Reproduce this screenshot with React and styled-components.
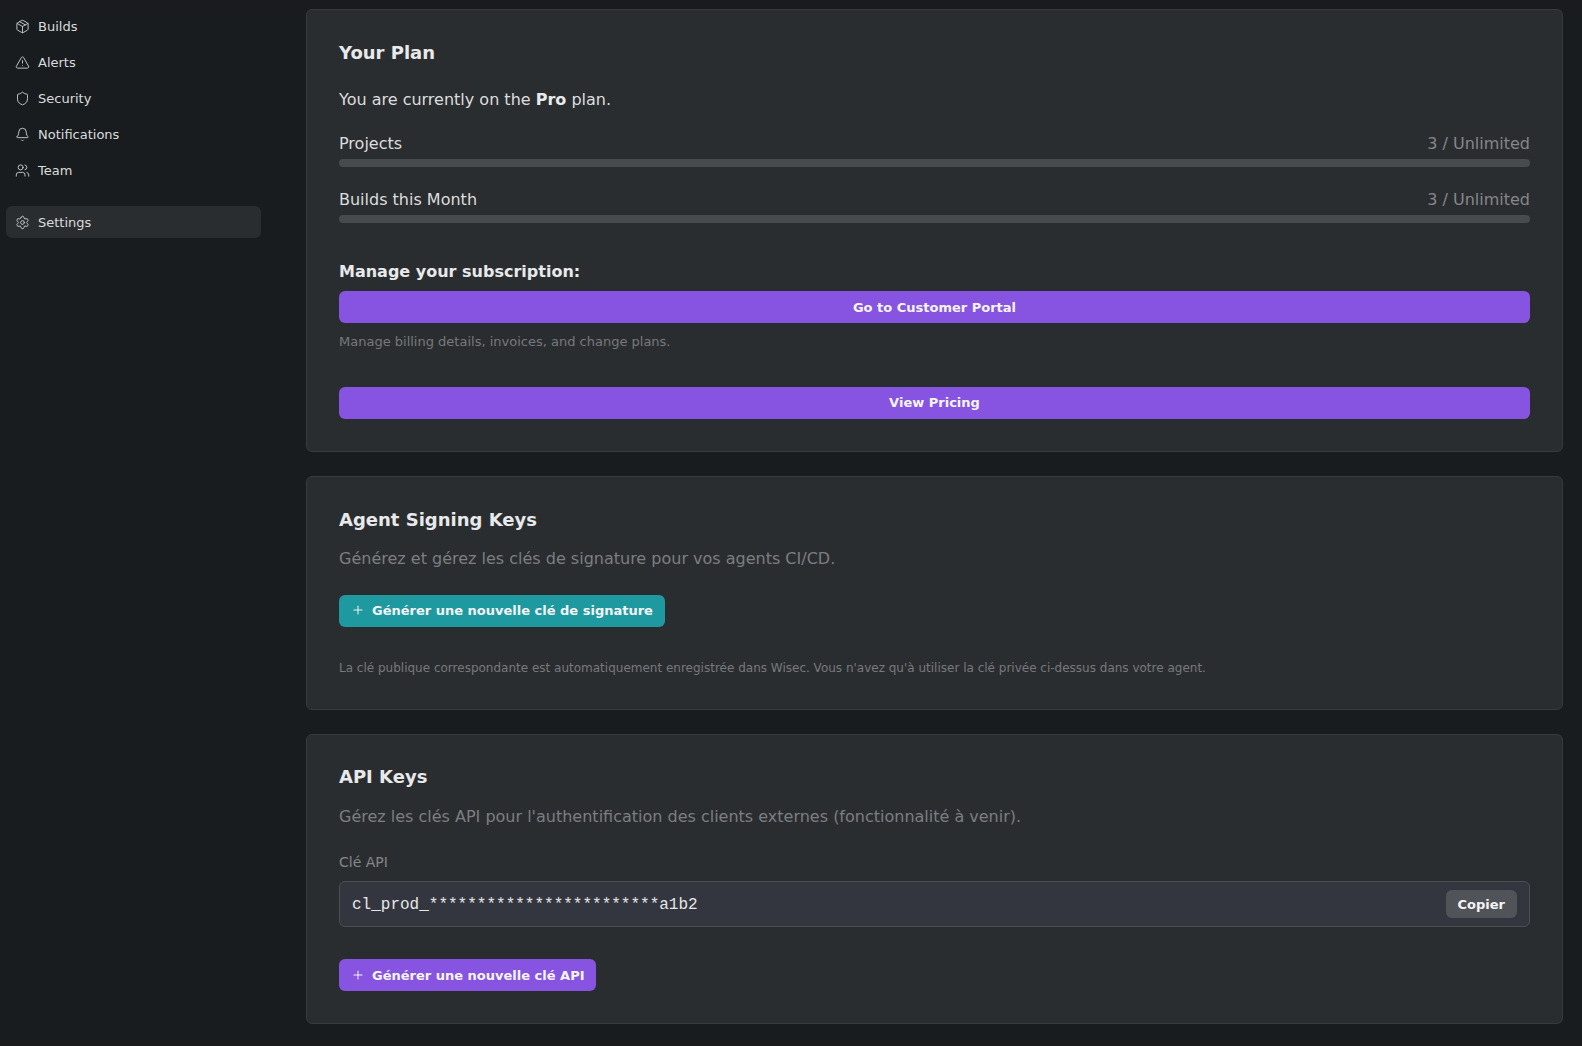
import React from "react";
import styled, { createGlobalStyle } from "styled-components";
import { Package, TriangleAlert, Shield, Bell, Users, Settings, Plus } from "lucide-react";

const Global = createGlobalStyle`
  html, body { margin: 0; padding: 0; background: #1a1b1d; height: 100%; overflow: hidden; }
  body { font-family: "DejaVu Sans", sans-serif; color: #e6e7e8; }
  * { box-sizing: border-box; }
`;
const Shell = styled.div`
  display: flex;
  height: 1035px;
  margin-top: 5px;
  background: #181c1f;
`;
const Sidebar = styled.nav`
  width: 267px;
  flex: none;
  padding: 5px 6px 0;
  display: flex;
  flex-direction: column;
  gap: 4px;
`;
const NavItem = styled.div`
  height: 32px;
  display: flex;
  align-items: center;
  gap: 8px;
  padding: 0 8px;
  border-radius: 6px;
  font-size: 13px;
  color: #dadbdc;
  margin-top: ${p => (p.$spaced ? "16px" : "0")};
  background: ${p => (p.$active ? "#2a2d30" : "transparent")};
  svg { width: 15px; height: 15px; margin: 0 0.5px; stroke-width: 1.5; color: #c8cacb; }
`;
const Main = styled.main`
  flex: 1;
  padding: 4px 19px 0 39px;
  display: flex;
  flex-direction: column;
  gap: 24px;
`;
const Card = styled.section`
  background: #2a2d30;
  border: 1px solid #373a3d;
  border-radius: 6px;
  padding: 32px;
`;
const Title = styled.h2`
  margin: ${p => p.$mt || 0}px 0 ${p => p.$mb}px;
  font-size: 18px;
  line-height: 21px;
  font-weight: 700;
  color: #e8e9ea;
`;
const Text = styled.p`
  margin: 0 0 ${p => p.$mb}px;
  font-size: 16px;
  line-height: 24px;
  color: ${p => (p.$muted ? "#7c7e81" : "#dcddde")};
  b { color: #e8e9ea; }
`;
const UsageRow = styled.div`
  display: flex;
  justify-content: space-between;
  font-size: 16px;
  line-height: 24px;
  color: #dcddde;
  margin-bottom: 3px;
`;
const UsageValue = styled.span`
  color: #85878a;
`;
const Bar = styled.div`
  height: 8px;
  border-radius: 4px;
  background: #484b4e;
  margin-bottom: ${p => p.$mb}px;
`;
const Subhead = styled.h3`
  margin: 0 0 7px;
  font-size: 16px;
  line-height: 24px;
  font-weight: 700;
  color: #e8e9ea;
`;
const Button = styled.button`
  height: 32px;
  border: none;
  border-radius: 6px;
  padding: 0 ${p => (p.$full ? "12px" : "11.6px")} ${p => (p.$nudge ? "2px" : "0")} 12px;
  display: ${p => (p.$full ? "flex" : "inline-flex")};
  width: ${p => (p.$full ? "100%" : "auto")};
  justify-content: center;
  align-items: center;
  gap: 6px;
  font-family: inherit;
  font-size: 13px;
  font-weight: 700;
  color: #f4f4f5;
  background: ${p => (p.$teal ? "#1e99a0" : "#8654e0")};
  svg { width: 14px; height: 14px; stroke-width: 1.75; margin-right: 1px; }
`;
const Hint = styled.p`
  margin: ${p => p.$mt}px 0 ${p => p.$mb}px;
  font-size: ${p => p.$size}px;
  line-height: 20px;
  color: #77797c;
`;
const Label = styled.div`
  font-size: 14px;
  line-height: 20px;
  color: #85878a;
  margin-bottom: 9px;
`;
const KeyBox = styled.div`
  height: 46px;
  display: flex;
  align-items: center;
  justify-content: space-between;
  padding: 0 12px;
  border: 1px solid #4c4f52;
  border-radius: 6px;
  background: #33363e;
  margin-bottom: 32px;
`;
const KeyText = styled.span`
  font-family: "Liberation Mono", monospace;
  font-size: 16px;
  padding-top: 2px;
  color: #e6e7e8;
`;
const CopyButton = styled.button`
  height: 28px;
  padding: 0 12px;
  border: none;
  border-radius: 6px;
  background: #505357;
  color: #f4f4f5;
  font-family: inherit;
  font-size: 13px;
  font-weight: 700;
`;

const nav = [
  [Package, "Builds"],
  [TriangleAlert, "Alerts"],
  [Shield, "Security"],
  [Bell, "Notifications"],
  [Users, "Team"],
];

export default function App() {
  return (
    <>
      <Global />
      <Shell>
        <Sidebar>
          {nav.map(([Icon, label]) => (
            <NavItem key={label}><Icon />{label}</NavItem>
          ))}
          <NavItem $active $spaced><Settings />Settings</NavItem>
        </Sidebar>
        <Main>
          <Card>
            <Title $mb={25}>Your Plan</Title>
            <Text $mb={20}>You are currently on the <b>Pro</b> plan.</Text>
            <UsageRow><span>Projects</span><UsageValue>3 / Unlimited</UsageValue></UsageRow>
            <Bar $mb={21} />
            <UsageRow><span>Builds this Month</span><UsageValue>3 / Unlimited</UsageValue></UsageRow>
            <Bar $mb={37} />
            <Subhead>Manage your subscription:</Subhead>
            <Button $full>Go to Customer Portal</Button>
            <Hint $size={13} $mt={9} $mb={35}>Manage billing details, invoices, and change plans.</Hint>
            <Button $full $nudge>View Pricing</Button>
          </Card>
          <Card>
            <Title $mb={17}>Agent Signing Keys</Title>
            <Text $muted $mb={24}>Générez et gérez les clés de signature pour vos agents CI/CD.</Text>
            <Button $teal $nudge><Plus />Générer une nouvelle clé de signature</Button>
            <Hint $size={12} $mt={31} $mb={-1}>La clé publique correspondante est automatiquement enregistrée dans Wisec. Vous n'avez qu'à utiliser la clé privée ci-dessus dans votre agent.</Hint>
          </Card>
          <Card>
            <Title $mt={-1} $mb={18}>API Keys</Title>
            <Text $muted $mb={23}>Gérez les clés API pour l'authentification des clients externes (fonctionnalité à venir).</Text>
            <Label>Clé API</Label>
            <KeyBox>
              <KeyText>cl_prod_************************a1b2</KeyText>
              <CopyButton>Copier</CopyButton>
            </KeyBox>
            <Button><Plus />Générer une nouvelle clé API</Button>
          </Card>
        </Main>
      </Shell>
    </>
  );
}
